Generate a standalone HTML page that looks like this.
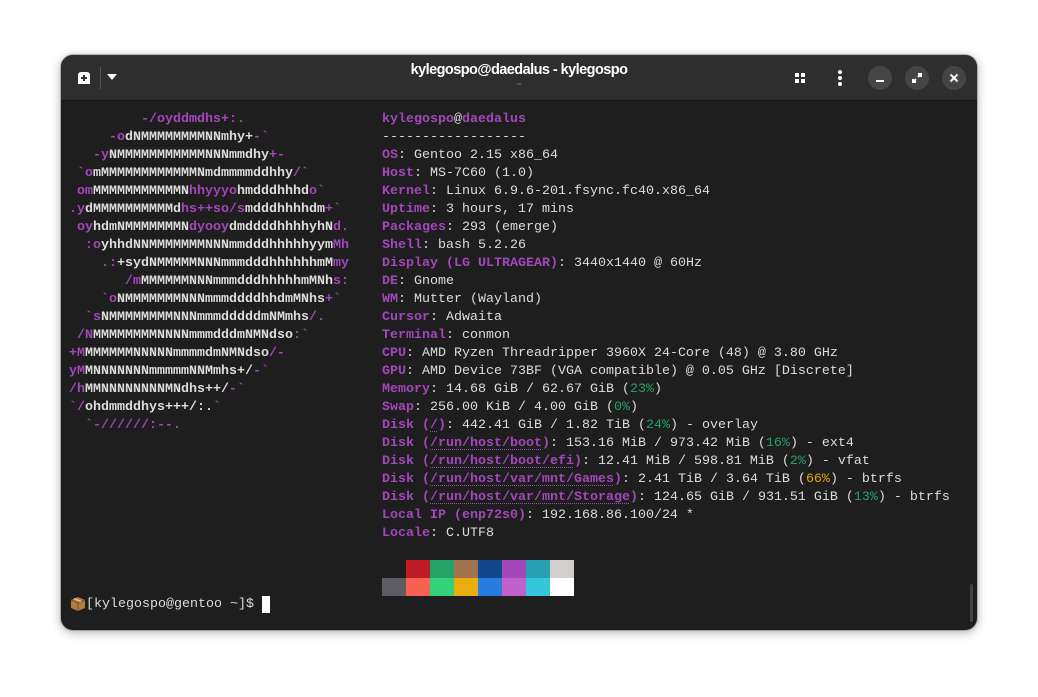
<!DOCTYPE html>
<html><head><meta charset="utf-8"><style>
*{margin:0;padding:0;box-sizing:border-box}
body{width:1038px;height:697px;background:#fff;position:relative;overflow:hidden;font-family:"Liberation Sans",sans-serif}
.win{position:absolute;left:61px;top:55px;width:916px;height:575px;border-radius:12px;background:#1e1e1e;box-shadow:0 2px 10px rgba(0,0,0,.35),0 0 0 1px rgba(0,0,0,.2);overflow:hidden}
.hdr{position:absolute;left:0;top:0;width:916px;height:46px;background:#2e2e2e;border-bottom:1px solid #151515}
.title{position:absolute;left:0;width:916px;top:7px;text-align:center;color:#fff;font-size:14.5px;font-weight:bold;letter-spacing:-0.55px}
.sub{position:absolute;left:0;width:916px;top:24px;text-align:center;color:#999;font-size:9px}
.cb{position:absolute;top:11px;width:24px;height:24px;border-radius:50%;background:#454545}
pre{position:absolute;font-family:"Liberation Mono",monospace;font-size:13.33px;line-height:18px;color:#deddda;white-space:pre}
.p{color:#a347ba}
.b{color:#a347ba;font-weight:bold}
.g{color:#26a269}
.y{color:#e5a50a}
.u{text-decoration:underline dotted #a347ba;text-decoration-thickness:1px;text-underline-offset:3px}
.blk{position:absolute;width:24px;height:18px}
</style></head><body>
<div class="win">
 <div class="hdr">
  <svg style="position:absolute;left:15px;top:15px" width="16" height="16" viewBox="0 0 16 16"><path d="M2 14V5a3 3 0 0 1 3-3h6a3 3 0 0 1 3 3v9z" fill="#fff"/><path d="M8 5v6M5 8h6" stroke="#2e2e2e" stroke-width="2"/></svg>
  <div style="position:absolute;left:39px;top:12px;width:1px;height:22px;background:#555"></div>
  <svg style="position:absolute;left:46px;top:19px" width="10" height="7"><path d="M0 0h10L5 6z" fill="#fff"/></svg>
  <div class="title">kylegospo@daedalus - kylegospo</div>
  <div class="sub">~</div>
  <svg style="position:absolute;left:733px;top:17px" width="12" height="12"><rect x="1" y="1" width="4" height="4" fill="#fff"/><rect x="7" y="1" width="4" height="4" fill="#fff"/><rect x="1" y="7" width="4" height="4" fill="#fff"/><rect x="7" y="7" width="4" height="4" fill="#fff"/></svg>
  <svg style="position:absolute;left:776px;top:14px" width="6" height="18"><circle cx="3" cy="3" r="2" fill="#fff"/><circle cx="3" cy="9" r="2" fill="#fff"/><circle cx="3" cy="15" r="2" fill="#fff"/></svg>
  <div class="cb" style="left:807px"><div style="position:absolute;left:8px;top:14px;width:8px;height:2px;background:#fff"></div></div>
  <div class="cb" style="left:844px"><svg width="24" height="24"><path d="M13 8h3v3M11 16H8v-3" stroke="#fff" stroke-width="2" fill="none"/><path d="M16 8l-3 3M8 16l3-3" stroke="#fff" stroke-width="2"/></svg></div>
  <div class="cb" style="left:881px"><svg width="24" height="24"><path d="M8.5 8.5l7 7M15.5 8.5l-7 7" stroke="#fff" stroke-width="2"/></svg></div>
 </div>
<pre style="left:8px;top:56px;font-weight:bold"><span class="p">         -/oyddmdhs+:.</span>
<span class="p">     -o</span>dNMMMMMMMMNNmhy+<span class="p">-`</span>
<span class="p">   -y</span>NMMMMMMMMMMMNNNmmdhy<span class="p">+-</span>
<span class="p"> `o</span>mMMMMMMMMMMMMNmdmmmmddhhy<span class="p">/`</span>
<span class="p"> om</span>MMMMMMMMMMMN<span class="p">hhyyyo</span>hmdddhhhd<span class="p">o`</span>
<span class="p">.y</span>dMMMMMMMMMMd<span class="p">hs++so/s</span>mdddhhhhdm<span class="p">+`</span>
<span class="p"> oy</span>hdmNMMMMMMMN<span class="p">dyooy</span>dmddddhhhhyhN<span class="p">d.</span>
<span class="p">  :o</span>yhhdNNMMMMMMMNNNmmdddhhhhhyym<span class="p">Mh</span>
<span class="p">    .:</span>+sydNMMMMMNNNmmmdddhhhhhhmM<span class="p">my</span>
<span class="p">       /m</span>MMMMMMNNNmmmdddhhhhhmMNh<span class="p">s:</span>
<span class="p">    `o</span>NMMMMMMMNNNmmmddddhhdmMNhs<span class="p">+`</span>
<span class="p">  `s</span>NMMMMMMMMNNNmmmdddddmNMmhs<span class="p">/.</span>
<span class="p"> /N</span>MMMMMMMMNNNNmmmdddmNMNdso<span class="p">:`</span>
<span class="p">+M</span>MMMMMMNNNNNmmmmdmNMNdso<span class="p">/-</span>
<span class="p">yM</span>MNNNNNNNmmmmmNNMmhs+/<span class="p">-`</span>
<span class="p">/h</span>MMNNNNNNNNMNdhs++/<span class="p">-`</span>
<span class="p">`/</span>ohdmmddhys+++/:.<span class="p">`</span>
<span class="p">  `-//////:--.</span></pre>
<pre style="left:321px;top:56px"><span class="b">kylegospo</span>@<span class="b">daedalus</span>
------------------
<span class="b">OS</span>: Gentoo 2.15 x86_64
<span class="b">Host</span>: MS-7C60 (1.0)
<span class="b">Kernel</span>: Linux 6.9.6-201.fsync.fc40.x86_64
<span class="b">Uptime</span>: 3 hours, 17 mins
<span class="b">Packages</span>: 293 (emerge)
<span class="b">Shell</span>: bash 5.2.26
<span class="b">Display (LG ULTRAGEAR)</span>: 3440x1440 @ 60Hz
<span class="b">DE</span>: Gnome
<span class="b">WM</span>: Mutter (Wayland)
<span class="b">Cursor</span>: Adwaita
<span class="b">Terminal</span>: conmon
<span class="b">CPU</span>: AMD Ryzen Threadripper 3960X 24-Core (48) @ 3.80 GHz
<span class="b">GPU</span>: AMD Device 73BF (VGA compatible) @ 0.05 GHz [Discrete]
<span class="b">Memory</span>: 14.68 GiB / 62.67 GiB (<span class="g">23%</span>)
<span class="b">Swap</span>: 256.00 KiB / 4.00 GiB (<span class="g">0%</span>)
<span class="b">Disk (<span class="u">/</span>)</span>: 442.41 GiB / 1.82 TiB (<span class="g">24%</span>) - overlay
<span class="b">Disk (<span class="u">/run/host/boot</span>)</span>: 153.16 MiB / 973.42 MiB (<span class="g">16%</span>) - ext4
<span class="b">Disk (<span class="u">/run/host/boot/efi</span>)</span>: 12.41 MiB / 598.81 MiB (<span class="g">2%</span>) - vfat
<span class="b">Disk (<span class="u">/run/host/var/mnt/Games</span>)</span>: 2.41 TiB / 3.64 TiB (<span class="y">66%</span>) - btrfs
<span class="b">Disk (<span class="u">/run/host/var/mnt/Storage</span>)</span>: 124.65 GiB / 931.51 GiB (<span class="g">13%</span>) - btrfs
<span class="b">Local IP (enp72s0)</span>: 192.168.86.100/24 *
<span class="b">Locale</span>: C.UTF8</pre>
<div class="blk" style="left:345px;top:505px;background:#c01c28"></div>
<div class="blk" style="left:369px;top:505px;background:#26a269"></div>
<div class="blk" style="left:393px;top:505px;background:#a2734c"></div>
<div class="blk" style="left:417px;top:505px;background:#12488b"></div>
<div class="blk" style="left:441px;top:505px;background:#a347ba"></div>
<div class="blk" style="left:465px;top:505px;background:#2aa1b3"></div>
<div class="blk" style="left:489px;top:505px;background:#d0cfcc"></div>
<div class="blk" style="left:321px;top:523px;background:#5e5c64"></div>
<div class="blk" style="left:345px;top:523px;background:#f66151"></div>
<div class="blk" style="left:369px;top:523px;background:#33d17a"></div>
<div class="blk" style="left:393px;top:523px;background:#e9ad0c"></div>
<div class="blk" style="left:417px;top:523px;background:#2a7bde"></div>
<div class="blk" style="left:441px;top:523px;background:#c061cb"></div>
<div class="blk" style="left:465px;top:523px;background:#33c7de"></div>
<div class="blk" style="left:489px;top:523px;background:#ffffff"></div>
<svg style="position:absolute;left:9px;top:541px" width="16" height="16" viewBox="0 0 16 16"><path d="M8 1l7 3v8l-7 3-7-3V4z" fill="#b27a45"/><path d="M1 4l7 3 7-3M8 7v8" stroke="#7a4e25" fill="none"/><path d="M4 2.5l7 3" stroke="#e2c08f" stroke-width="1.5"/></svg>
<pre style="left:25px;top:541px">[kylegospo@gentoo ~]$ </pre>
<div style="position:absolute;left:201px;top:541px;width:8px;height:17px;background:#fff"></div>
<div style="position:absolute;left:909px;top:529px;width:3px;height:38px;border-radius:2px;background:#444"></div>
</div>
</body></html>
